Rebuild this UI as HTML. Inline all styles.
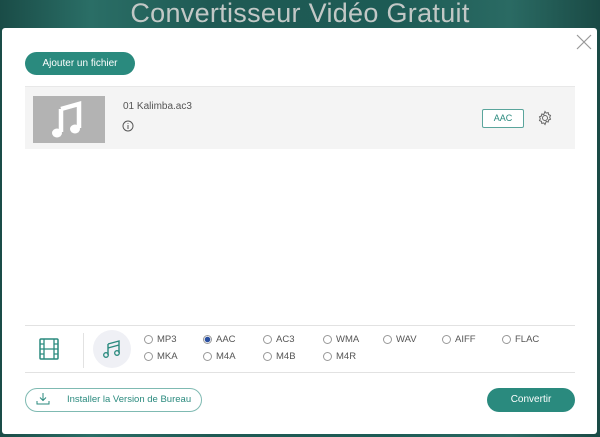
<!DOCTYPE html>
<html><head><meta charset="utf-8"><style>
*{margin:0;padding:0;box-sizing:border-box}
body{width:600px;height:437px;overflow:hidden;background:#1f5650;font-family:"Liberation Sans",sans-serif;position:relative}
.bg{position:absolute;left:0;top:0;width:600px;height:437px;background:linear-gradient(90deg,#1a4c47 0%,#2a6e66 15%,#1f5a54 35%,#1d5b55 65%,#2a6a63 85%,#1a4a45 100%)}
.title{position:absolute;left:0;width:600px;top:-2px;text-align:center;color:#c2c8c6;font-size:27px;font-weight:normal;letter-spacing:0.3px}
.modal{position:absolute;left:2px;top:28px;width:595px;height:406px;background:#fff;border-radius:3px}
.abs{position:absolute}
.btn{position:absolute;background:#2a8a7e;color:#fff;border-radius:12px;font-size:10px;text-align:center;line-height:23px}
.row{position:absolute;left:23px;top:58px;width:550px;height:63px;background:#f4f4f4;border-top:1px solid #e8e8e8}
.thumb{position:absolute;left:8px;top:9px;width:72px;height:47px;background:#b3b3b3}
.t{position:absolute;font-size:9.5px;color:#555}
.radio{position:absolute;font-size:9.5px;color:#555;padding-left:13px}
.radio:before{content:"";position:absolute;left:0;top:1px;width:7px;height:7px;border:1px solid #999;border-radius:50%;background:#fff}
.radio.on:before{background:radial-gradient(circle,#2a4fa0 0 2.5px,#fff 3px)}
</style></head><body>
<div class="bg"></div>
<div class="title">Convertisseur Vidéo Gratuit</div>
<div class="modal">
  <svg class="abs" style="left:574px;top:6px" width="16" height="16"><path d="M1 1L15 15M15 1L1 15" stroke="#999" stroke-width="1.2"/></svg>
  <div class="btn" style="left:23px;top:24px;width:110px;height:23px">Ajouter un fichier</div>
  <div class="row">
    <div class="thumb"><svg width="72" height="47"><g fill="#fff"><path d="M28 13L46 8V32" stroke="#fff" stroke-width="4.5" fill="none"/><path d="M28 13V36" stroke="#fff" stroke-width="4.5"/><ellipse cx="24" cy="37" rx="5" ry="4.5"/><ellipse cx="42" cy="33" rx="5" ry="4.5"/></g></svg></div>
    <div class="t" style="left:98px;top:14px;font-size:10px">01 Kalimba.ac3</div>
    <svg class="abs" style="left:97px;top:33px" width="12" height="12"><circle cx="6" cy="6" r="5" fill="none" stroke="#555"/><path d="M6 5V9M6 3.3V4" stroke="#555"/></svg>
    <div class="abs" style="left:457px;top:22px;width:42px;height:19px;border:1px solid #5aa59c;border-radius:2px;background:#fff;color:#2a8a7e;font-size:9px;text-align:center;line-height:17px">AAC</div>
    <svg class="abs" style="left:512px;top:23px" width="16" height="16" viewBox="0 0 16 16"><circle cx="8" cy="8" r="2.5" fill="none" stroke="#666"/><path d="M8 1.5l1.2 1.6 2-.5.4 2 1.9.8-.8 1.9.8 1.9-1.9.8-.4 2-2-.5L8 14.5l-1.2-1.6-2 .5-.4-2-1.9-.8.8-1.9-.8-1.9 1.9-.8.4-2 2 .5z" fill="none" stroke="#666"/></svg>
  </div>
  <div class="abs" style="left:23px;top:297px;width:550px;height:1px;background:#e2e2e2"></div>
  <svg class="abs" style="left:37px;top:310px" width="20" height="22"><rect x="1" y="1" width="18" height="20" rx="1" fill="none" stroke="#2a8a7e" stroke-width="1.5"/><path d="M5 1V21M15 1V21M1 6H5M1 11H19M1 16H5M15 6H19M15 16H19" stroke="#2a8a7e" stroke-width="1.3"/></svg>
  <div class="abs" style="left:81px;top:305px;width:1px;height:35px;background:#e2e2e2"></div>
  <div class="abs" style="left:91px;top:302px;width:38px;height:38px;border-radius:50%;background:#eff0f5"></div>
  <svg class="abs" style="left:100px;top:311px" width="20" height="20"><path d="M6 5L17 2V14M6 5V16M6 9L17 6" stroke="#2a8a7e" stroke-width="1.4" fill="none"/><circle cx="4" cy="16" r="2.3" fill="none" stroke="#2a8a7e" stroke-width="1.3"/><circle cx="15" cy="14" r="2.3" fill="none" stroke="#2a8a7e" stroke-width="1.3"/></svg>
  <div class="radio" style="left:142px;top:306px">MP3</div>
  <div class="radio on" style="left:201px;top:306px">AAC</div>
  <div class="radio" style="left:261px;top:306px">AC3</div>
  <div class="radio" style="left:321px;top:306px">WMA</div>
  <div class="radio" style="left:381px;top:306px">WAV</div>
  <div class="radio" style="left:440px;top:306px">AIFF</div>
  <div class="radio" style="left:500px;top:306px">FLAC</div>
  <div class="radio" style="left:142px;top:323px">MKA</div>
  <div class="radio" style="left:201px;top:323px">M4A</div>
  <div class="radio" style="left:261px;top:323px">M4B</div>
  <div class="radio" style="left:321px;top:323px">M4R</div>
  <div class="abs" style="left:23px;top:344px;width:550px;height:1px;background:#e2e2e2"></div>
  <div class="abs" style="left:23px;top:360px;width:177px;height:24px;border:1px solid #7fbab2;border-radius:12px;color:#2a8a7e;font-size:9.5px;line-height:22px;padding-left:41px">Installer la Version de Bureau</div>
  <svg class="abs" style="left:34px;top:364px" width="14" height="14"><path d="M7 1V8M4 5.5L7 8.5L10 5.5M1 9V12H13V9" stroke="#2a8a7e" fill="none"/></svg>
  <div class="btn" style="left:485px;top:360px;width:88px;height:24px;line-height:24px">Convertir</div>
</div>
</body></html>
